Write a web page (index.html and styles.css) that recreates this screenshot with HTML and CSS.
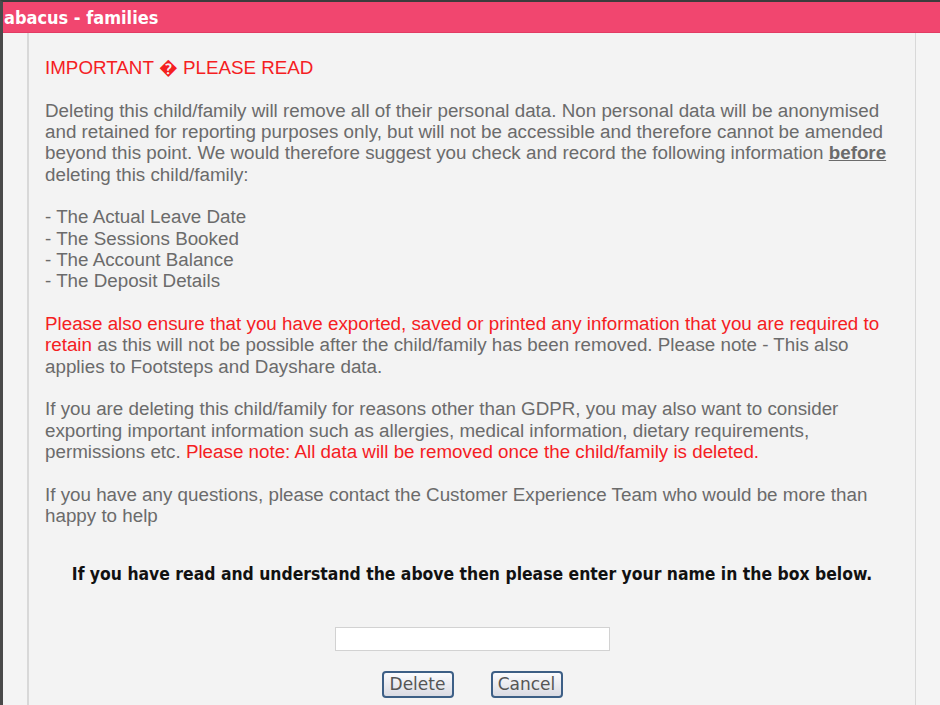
FILE: index.html
```html
<!DOCTYPE html>
<html lang="en">
<head>
    <meta charset="UTF-8">
    <title>abacus - families</title>
    <link rel="stylesheet" href="styles.css">
</head>
<body>
    <div class="frame">
        <!-- 타이틀바 -->
        <div class="titlebar">abacus - families</div>

        <div class="outer">
            <!-- 삭제 확인 패널 -->
            <div class="panel">
                <p class="warn">IMPORTANT � PLEASE READ</p>

                <p>Deleting this child/family will remove all of their personal data. Non personal data will be anonymised and retained for reporting purposes only, but will not be accessible and therefore cannot be amended beyond this point. We would therefore suggest you check and record the following information <b class="under">before</b> deleting this child/family:</p>

                <p>- The Actual Leave Date<br>- The Sessions Booked<br>- The Account Balance<br>- The Deposit Details</p>

                <p><span class="red">Please also ensure that you have exported, saved or printed any information that you are required to retain</span> as this will not be possible after the child/family has been removed. Please note - This also applies to Footsteps and Dayshare data.</p>

                <p>If you are deleting this child/family for reasons other than GDPR, you may also want to consider exporting important information such as allergies, medical information, dietary requirements, permissions etc. <span class="red">Please note: All data will be removed once the child/family is deleted.</span></p>

                <p>If you have any questions, please contact the Customer Experience Team who would be more than happy to help</p>

                <p class="confirm">If you have read and understand the above then please enter your name in the box below.</p>

                <div class="namebox">
                    <input type="text" class="name">
                </div>

                <div class="btns">
                    <button class="btn">Delete</button>
                    <button class="btn">Cancel</button>
                </div>
            </div>
        </div>
    </div>
</body>
</html>
```

FILE: styles.css
```css
html,body{
    margin: 0;
    padding: 0;
}
body{
    background-color: #f4f4f4;
    overflow: hidden;
}

/* 전체 창 */
.frame{
    height: 703px;
    border-top: 2px solid #3c3c3c;
    border-left: 3px solid #4a4a4a;
}

/* 분홍 타이틀바 */
.titlebar{
    height: 30px;
    padding-left: 1px;
    background-color: #f1466f;
    border-bottom: 1px solid #e23b63;
    color: #fff;
    font-family: "DejaVu Sans Condensed", "DejaVu Sans", sans-serif;
    font-weight: bold;
    font-size: 18px;
    line-height: 31px;
}

.outer{
    padding: 0 24px;
}

/* 안쪽 패널 */
.panel{
    height: 668px;
    padding: 24px 16px 0 16px;
    background-color: #f3f3f3;
    border: 1px solid #d8d8d8;
    border-top: 0;
    border-left-width: 2px;
    font-family: "Liberation Sans", Arial, sans-serif;
    font-size: 18.8px;
    line-height: 21.33px;
    color: #6b6b6b;
}
.panel p{
    margin: 0 0 21.33px;
}

.warn,
.red{
    color: #f5201f;
}
.under{
    text-decoration: underline;
}

/* 확인 문구 */
.panel .confirm{
    margin: 38px 0 0;
    text-align: center;
    color: #111;
    font-family: "DejaVu Sans Condensed", "DejaVu Sans", sans-serif;
    font-weight: bold;
    font-size: 17.4px;
}

.namebox{
    margin-top: 41px;
    text-align: center;
}
.name{
    width: 271px;
    height: 20px;
    padding: 1px;
    border: 1px solid #d2d2d2;
    background-color: #fff;
    outline: none;
    vertical-align: top;
}

/* 버튼 */
.btns{
    display: flex;
    justify-content: center;
    gap: 37px;
    margin-top: 20px;
}
.btn{
    width: 72px;
    height: 27px;
    padding: 0;
    border: 2px solid #3d5f86;
    border-radius: 4px;
    background-image: linear-gradient(to bottom, #fbfbfd, #dadbe3);
    color: #555;
    font-family: "DejaVu Sans", sans-serif;
    font-size: 17px;
}
```
